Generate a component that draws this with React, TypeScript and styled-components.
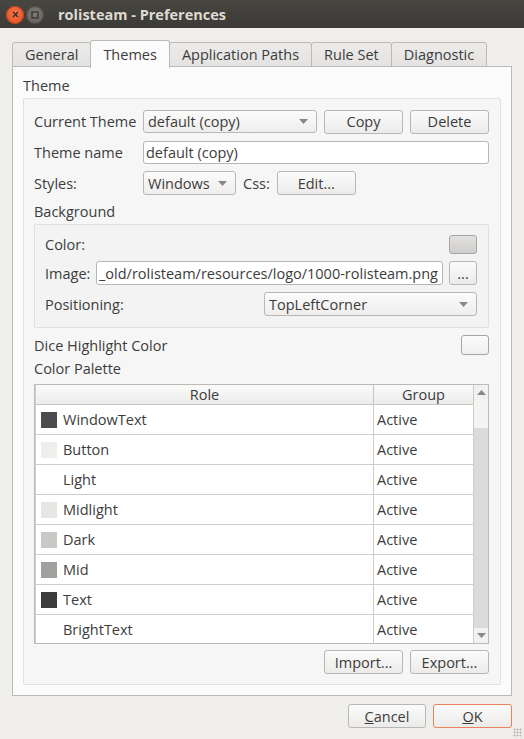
import styled, { createGlobalStyle } from "styled-components";

const GlobalStyle = createGlobalStyle`
  html, body {
    margin: 0;
    padding: 0;
  }
  body {
    width: 524px;
    height: 739px;
    overflow: hidden;
    font-family: "Open Sans", "Noto Sans", sans-serif;
    font-size: 14.5px;
    color: #3c3c3c;
    background: #efeeed;
  }
`;

const Window = styled.div`
  position: relative;
  width: 524px;
  height: 739px;
  display: flex;
  flex-direction: column;
  background: #efeeed;
`;

const TitleBar = styled.div`
  height: 28px;
  flex-shrink: 0;
  display: flex;
  align-items: center;
  padding: 1px 0 0 6px;
  box-sizing: border-box;
  gap: 2px;
  background: linear-gradient(#474641, #3b3a36);
`;

const WinButton = styled.span<{ $close?: boolean }>`
  width: 18px;
  height: 18px;
  border-radius: 50%;
  display: flex;
  align-items: center;
  justify-content: center;
  background: ${(p) =>
    p.$close
      ? "radial-gradient(circle at 50% 40%, #f4774a, #df4a1f)"
      : "radial-gradient(circle at 50% 40%, #7c7b76, #5d5c58)"};
  box-shadow: inset 0 0 0 1px ${(p) => (p.$close ? "#b8401c" : "#4a4945")};
`;

const WinTitle = styled.span`
  margin-left: 12px;
  font-weight: bold;
  font-size: 14.5px;
  color: #dfdbd2;
`;

const Body = styled.div`
  flex: 1;
  display: flex;
  flex-direction: column;
  padding: 0 12px 12px 12px;
`;

const TabBar = styled.div`
  height: 39px;
  flex-shrink: 0;
  display: flex;
  align-items: flex-end;
  position: relative;
  z-index: 1;
`;

const Tab = styled.div<{ $active?: boolean }>`
  height: ${(p) => (p.$active ? "28px" : "25px")};
  margin-bottom: ${(p) => (p.$active ? "-1px" : "0")};
  margin-left: -1px;
  padding: 0 12px;
  box-sizing: border-box;
  display: flex;
  align-items: center;
  justify-content: center;
  border: 1px solid #bcbab6;
  border-bottom: ${(p) => (p.$active ? "none" : "1px solid #bcbab6")};
  border-radius: 3px 3px 0 0;
  background: ${(p) => (p.$active ? "#fbfbfb" : "linear-gradient(#ecebea, #e4e3e1)")};
  &:first-child {
    margin-left: 0;
  }
`;

const Panel = styled.div`
  flex: 1;
  margin-top: -1px;
  display: flex;
  flex-direction: column;
  border: 1px solid #bcbab6;
  background: #fbfbfb;
  padding: 10px 10px 10px 10px;
  overflow: hidden;
`;

const SectionTitle = styled.div<{ $mt?: number }>`
  height: 18px;
  line-height: 18px;
  margin-top: ${(p) => p.$mt ?? 0}px;
  margin-bottom: 3px;
  white-space: nowrap;
`;

const GroupFrame = styled.div`
  flex: 1;
  display: flex;
  flex-direction: column;
  border: 1px solid #e1e0df;
  border-radius: 2px;
  background: #f6f6f6;
  padding: 11px 11px 10px 10px;
`;

const Row = styled.div<{ $h?: number; $mt?: number; $gap?: number }>`
  height: ${(p) => p.$h ?? 23}px;
  margin-top: ${(p) => p.$mt ?? 0}px;
  flex-shrink: 0;
  display: flex;
  align-items: center;
  gap: ${(p) => p.$gap ?? 7}px;
`;

const Label = styled.span<{ $w?: number; $grow?: boolean }>`
  width: ${(p) => (p.$w ? `${p.$w - 7}px` : "auto")};
  flex: ${(p) => (p.$grow ? 1 : "none")};
  white-space: nowrap;
`;

const Combo = styled.div<{ $w?: number }>`
  flex: ${(p) => (p.$w ? "none" : 1)};
  width: ${(p) => (p.$w ? `${p.$w}px` : "auto")};
  height: 100%;
  box-sizing: border-box;
  display: flex;
  align-items: center;
  justify-content: space-between;
  padding: 0 8px 0 4px;
  border: 1px solid #b9b7b4;
  border-radius: 3px;
  background: linear-gradient(#fbfbfb, #efeeed);
  white-space: nowrap;
`;

const Field = styled.div`
  flex: 1;
  height: 100%;
  box-sizing: border-box;
  display: flex;
  align-items: center;
  justify-content: flex-end;
  padding: 0 4px 0 2px;
  border: 1px solid #b9b7b4;
  border-radius: 3px;
  background: #ffffff;
  white-space: nowrap;
  overflow: hidden;
`;

const FieldText = styled.span<{ $left?: boolean }>`
  flex: none;
  margin-right: ${(p) => (p.$left ? "auto" : "0")};
`;

const Button = styled.button<{ $w?: number; $h?: number; $default?: boolean }>`
  width: ${(p) => p.$w ?? 79}px;
  height: ${(p) => p.$h ?? 24}px;
  flex-shrink: 0;
  padding: 0;
  font: inherit;
  color: inherit;
  border: 1px solid ${(p) => (p.$default ? "#e8825c" : "#b9b7b4")};
  border-radius: 3px;
  background: linear-gradient(#fbfbfb, #ecebea);
  white-space: nowrap;
`;

const ColorButton = styled.div<{ $fill: string; $h?: number }>`
  width: 28px;
  height: ${(p) => p.$h ?? 19}px;
  flex-shrink: 0;
  box-sizing: border-box;
  border: 1px solid #a8a6a3;
  border-radius: 3px;
  background: ${(p) => p.$fill};
`;

const SubFrame = styled.div`
  height: 104px;
  flex-shrink: 0;
  box-sizing: border-box;
  display: flex;
  flex-direction: column;
  gap: 7px;
  border: 1px solid #e0dfde;
  border-radius: 2px;
  background: #f3f3f3;
  padding: 10px 11px 10px 10px;
`;

const TableFrame = styled.div`
  height: 260px;
  margin-top: 6px;
  flex-shrink: 0;
  box-sizing: border-box;
  display: flex;
  border: 1px solid #bcbab6;
  background: #ffffff;
  overflow: hidden;
`;

const TableBody = styled.div`
  flex: 1;
  display: grid;
  grid-template-columns: 1fr 99px;
  grid-auto-rows: 30px;
  grid-template-rows: 20px;
  border-left: 1px solid #d2d0cd;
  align-content: start;
`;

const HeaderCell = styled.div`
  display: flex;
  align-items: center;
  justify-content: center;
  border-bottom: 1px solid #c7c5c2;
  border-right: 1px solid #c7c5c2;
  background: linear-gradient(#fafafa, #ececeb);
  &:nth-child(2) {
    border-right: none;
  }
`;

const Cell = styled.div<{ $first?: boolean }>`
  display: flex;
  align-items: center;
  gap: 6px;
  padding-left: ${(p) => (p.$first ? "5px" : "3px")};
  border-bottom: 1px solid #cfcdca;
  border-right: ${(p) => (p.$first ? "1px solid #cfcdca" : "none")};
  white-space: nowrap;
`;

const Swatch = styled.span<{ $color?: string }>`
  width: 16px;
  height: 16px;
  flex-shrink: 0;
  background: ${(p) => p.$color ?? "transparent"};
`;

const ScrollBar = styled.div`
  width: 14px;
  display: flex;
  flex-direction: column;
  border-left: 1px solid #cfcdca;
  background: #f2f1f0;
`;

const ScrollArrow = styled.div`
  height: 15px;
  flex-shrink: 0;
  display: flex;
  align-items: center;
  justify-content: center;
`;

const ScrollTrough = styled.div`
  height: 28px;
  flex-shrink: 0;
  background: #f4f4f3;
`;

const ScrollThumb = styled.div`
  flex: 1;
  background: #dcdbda;
`;

const DialogButtons = styled.div`
  height: 24px;
  margin-top: 8px;
  flex-shrink: 0;
  display: flex;
  justify-content: flex-end;
  gap: 7px;
`;

const SizeGrip = styled.div`
  position: absolute;
  right: 2px;
  bottom: 2px;
  width: 9px;
  height: 9px;
  background-image: radial-gradient(circle, #b5b3b0 0.8px, transparent 1.2px);
  background-size: 3px 3px;
`;

function Arrow({ up }: { up?: boolean }) {
  return (
    <svg width="9" height="5" viewBox="0 0 9 5">
      <polygon points={up ? "0,5 9,5 4.5,0" : "0,0 9,0 4.5,5"} fill="#8a8886" />
    </svg>
  );
}

const palette: { role: string; color?: string }[] = [
  { role: "WindowText", color: "#4c4c4c" },
  { role: "Button", color: "#efeeed" },
  { role: "Light" },
  { role: "Midlight", color: "#e7e6e5" },
  { role: "Dark", color: "#c9c8c6" },
  { role: "Mid", color: "#a1a09f" },
  { role: "Text", color: "#3c3c3c" },
  { role: "BrightText" },
];

const tabs = ["General", "Themes", "Application Paths", "Rule Set", "Diagnostic"];

function App() {
  return (
    <Window>
      <GlobalStyle />
      <TitleBar>
        <WinButton $close>
          <svg width="7" height="7" viewBox="0 0 7 7">
            <path d="M1 1L6 6M6 1L1 6" stroke="#3a2a25" strokeWidth="1.4" />
          </svg>
        </WinButton>
        <WinButton>
          <svg width="8" height="8" viewBox="0 0 8 8">
            <rect x="1" y="1" width="6" height="6" fill="none" stroke="#35342f" strokeWidth="1.3" />
          </svg>
        </WinButton>
        <WinTitle>rolisteam - Preferences</WinTitle>
      </TitleBar>
      <Body>
        <TabBar>
          {tabs.map((t) => (
            <Tab key={t} $active={t === "Themes"}>
              {t}
            </Tab>
          ))}
        </TabBar>
        <Panel>
          <SectionTitle>Theme</SectionTitle>
          <GroupFrame>
            <Row>
              <Label $w={109}>Current Theme</Label>
              <Combo>
                <span>default (copy)</span>
                <Arrow />
              </Combo>
              <Button>Copy</Button>
              <Button>Delete</Button>
            </Row>
            <Row $mt={8}>
              <Label $w={109}>Theme name</Label>
              <Field>
                <FieldText $left>default (copy)</FieldText>
              </Field>
            </Row>
            <Row $mt={7} $h={24}>
              <Label $w={109}>Styles:</Label>
              <Combo $w={93}>
                <span>Windows</span>
                <Arrow />
              </Combo>
              <Label>Css:</Label>
              <Button>Edit...</Button>
            </Row>
            <SectionTitle $mt={8}>Background</SectionTitle>
            <SubFrame>
              <Row $h={19}>
                <Label $grow>Color:</Label>
                <ColorButton $fill="linear-gradient(#e2e1e0, #cfcecd)" />
              </Row>
              <Row $h={24} $gap={6}>
                <Label>Image:</Label>
                <Field>
                  <FieldText>_old/rolisteam/resources/logo/1000-rolisteam.png</FieldText>
                </Field>
                <Button $w={28}>...</Button>
              </Row>
              <Row $h={24}>
                <Label $grow>Positioning:</Label>
                <Combo $w={213}>
                  <span>TopLeftCorner</span>
                  <Arrow />
                </Combo>
              </Row>
            </SubFrame>
            <Row $mt={7} $h={20}>
              <Label $grow>Dice Highlight Color</Label>
              <ColorButton $fill="linear-gradient(#fbfbfb, #f0efee)" $h={20} />
            </Row>
            <SectionTitle $mt={5} style={{ marginBottom: 0 }}>
              Color Palette
            </SectionTitle>
            <TableFrame>
              <TableBody>
                <HeaderCell>Role</HeaderCell>
                <HeaderCell>Group</HeaderCell>
                {palette.map((p) => [
                  <Cell key={p.role} $first>
                    <Swatch $color={p.color} />
                    {p.role}
                  </Cell>,
                  <Cell key={p.role + "-g"}>Active</Cell>,
                ])}
              </TableBody>
              <ScrollBar>
                <ScrollArrow>
                  <Arrow up />
                </ScrollArrow>
                <ScrollTrough />
                <ScrollThumb />
                <ScrollArrow>
                  <Arrow />
                </ScrollArrow>
              </ScrollBar>
            </TableFrame>
            <Row $mt={6} $h={24} style={{ justifyContent: "flex-end" }}>
              <Button>Import...</Button>
              <Button>Export...</Button>
            </Row>
          </GroupFrame>
        </Panel>
        <DialogButtons>
          <Button $w={78}>
            <u>C</u>ancel
          </Button>
          <Button $default>
            <u>O</u>K
          </Button>
        </DialogButtons>
      </Body>
      <SizeGrip />
    </Window>
  );
}

export default App;
